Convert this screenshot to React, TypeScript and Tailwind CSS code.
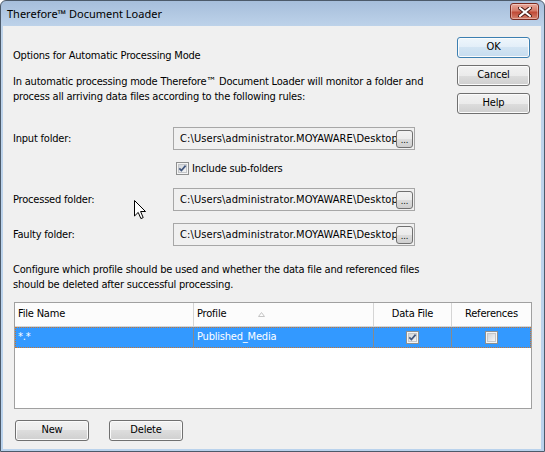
import React from "react";

const dlg = "font-['DejaVu_Sans_Condensed','Liberation_Sans',sans-serif] text-[11px] tracking-[-0.2px] text-black";

type BtnProps = { label: string; isDefault?: boolean; className?: string };

const Button = ({ label, isDefault, className }: BtnProps) => (
  <div
    className={`flex h-[21px] items-center justify-center rounded-[3px] border shadow-[inset_0_0_0_1px_#fbfbfb] ${
      isDefault
        ? "border-[#3c7fb1] bg-[linear-gradient(to_bottom,#eef6fc_0%,#e2eef8_50%,#d2e4f3_50%,#c6dcef_100%)]"
        : "border-[#707070] bg-[linear-gradient(to_bottom,#f2f2f2_0%,#ebebeb_50%,#dddddd_50%,#cfcfcf_100%)]"
    } ${className ?? ""}`}
  >
    {label}
  </div>
);

const CheckBox = ({ checked }: { checked: boolean }) => (
  <svg width="13" height="13" viewBox="0 0 13 13" className="shrink-0">
    <defs>
      <linearGradient id="cbg" x1="0" y1="0" x2="1" y2="1">
        <stop offset="0" stopColor="#cfd3d8" />
        <stop offset="1" stopColor="#f7f7f7" />
      </linearGradient>
    </defs>
    <rect x="0.5" y="0.5" width="12" height="12" fill="#f4f4f4" stroke="#8e8f8f" />
    <rect x="2.5" y="2.5" width="8" height="8" fill="url(#cbg)" stroke="#c4c6c9" />
    {checked && (
      <path d="M3.3 6.4 L5.4 8.6 L9.6 3.6" fill="none" stroke="#43587e" strokeWidth="1.7" />
    )}
  </svg>
);

const FolderRow = ({ label }: { label: string }) => (
  <div className="flex h-[23px] items-center">
    <div className="w-[160px]">{label}</div>
    <div className="flex h-[23px] w-[242px] items-center border border-[#a7a7a7] bg-[#f0f0f0] pl-[6px] pr-[1px]">
      <div className="min-w-0 flex-1 whitespace-nowrap tracking-[0.1px]">
        C:\Users\administrator.MOYAWARE\Desktop
      </div>
      <div className="flex h-[18px] w-[17px] shrink-0 items-end justify-center rounded-[3px] border border-[#707070] bg-[linear-gradient(to_bottom,#f2f2f2_0%,#ebebeb_50%,#dddddd_50%,#cfcfcf_100%)] pb-[2px] text-[9px] leading-[9px] tracking-normal">
        ...
      </div>
    </div>
  </div>
);

const CloseGlyph = () => (
  <svg width="14" height="10" viewBox="0 0 14 10">
    <path d="M2 1 L12 9 M12 1 L2 9" stroke="#4a1a14" strokeWidth="4" strokeLinecap="square" />
    <path d="M2 1 L12 9 M12 1 L2 9" stroke="#ffffff" strokeWidth="2" strokeLinecap="square" />
  </svg>
);

const Cursor = () => (
  <svg width="13" height="20" viewBox="0 0 13 20" className="absolute left-[133px] top-[199px]">
    <path
      d="M0.5 0.5 L0.5 16 L4.2 12.4 L6.9 18.6 L9.2 17.6 L6.6 11.5 L11.5 11.5 Z"
      fill="#ffffff"
      stroke="#000000"
      strokeWidth="1"
    />
  </svg>
);

const App = () => {
  return (
    <div className="relative flex h-[452px] w-[545px] flex-col overflow-hidden rounded-t-[6px] border border-[#4c5a6a] bg-[linear-gradient(to_bottom,#a6bedb_0px,#bed3ea_26px,#b9d2ec_100%)]">
      {/* title bar */}
      <div className="flex h-[25px] shrink-0 items-center justify-between pl-[6px] pr-[5px]">
        <div className="pt-[2px] font-['Noto_Sans','Open_Sans',sans-serif] text-[11px] text-black">
          Therefore™ Document Loader
        </div>
        <div className="mt-[-4px] flex h-[17px] w-[29px] items-center justify-center rounded-[3px] border border-[#7a2a20] bg-[linear-gradient(to_bottom,#e9a99b_0%,#d47a69_45%,#c04a36_55%,#d5826f_100%)] shadow-[inset_0_0_0_1px_rgba(255,255,255,0.35)]">
          <CloseGlyph />
        </div>
      </div>

      {/* client area */}
      <div className={`mb-[2px] ml-[2px] mr-[3px] flex flex-1 flex-col bg-[#f0f0f0] pl-[10px] pr-[9px] ${dlg}`}>
        <div className="flex">
          <div className="flex flex-1 flex-col pt-[22px] leading-[15px]">
            <div>Options for Automatic Processing Mode</div>
            <div className="mt-[11px]">
              In automatic processing mode Therefore™ Document Loader will monitor a folder and
              <br />
              process all arriving data files according to the following rules:
            </div>
            <div className="mt-[23px]">
              <FolderRow label="Input folder:" />
            </div>
            <div className="mt-[11px] flex h-[15px] items-center gap-[3px] pl-[163px]">
              <CheckBox checked />
              <span>Include sub-folders</span>
            </div>
            <div className="mt-[12px]">
              <FolderRow label="Processed folder:" />
            </div>
            <div className="mt-[12px]">
              <FolderRow label="Faulty folder:" />
            </div>
          </div>
          <div className="mr-[2px] mt-[11px] flex w-[73px] flex-col gap-[7px]">
            <Button label="OK" isDefault />
            <Button label="Cancel" />
            <Button label="Help" />
          </div>
        </div>

        <div className="mt-[16px] leading-[15px]">
          Configure which profile should be used and whether the data file and referenced files
          <br />
          should be deleted after successful processing.
        </div>

        {/* list */}
        <div className="ml-[1px] mt-[10px] flex h-[107px] flex-col border border-[#a0a0a0] bg-white">
          <div className="flex h-[24px] border-b border-[#d5d5d5] bg-[#fcfcfc]">
            <div className="flex w-[179px] items-center border-r border-[#d5d5d5] pl-[3px]">File Name</div>
            <div className="flex w-[180px] items-center gap-[32px] border-r border-[#d5d5d5] pl-[3px]">
              <span>Profile</span>
              <svg width="7" height="5" viewBox="0 0 7 5">
                <path d="M3.5 0.5 L6.5 4.5 L0.5 4.5 Z" fill="none" stroke="#c4c4c4" />
              </svg>
            </div>
            <div className="flex w-[78px] items-center justify-center border-r border-[#d5d5d5]">Data File</div>
            <div className="flex flex-1 items-center justify-center">References</div>
          </div>
          <div className="flex h-[21px] border border-dotted border-[#c8742e] bg-[#3399ff] text-white">
            <div className="flex w-[178px] items-center border-r border-[#8a8a8a] pl-[2px]">*.*</div>
            <div className="flex w-[180px] items-center border-r border-[#8a8a8a] pl-[3px]">Published_Media</div>
            <div className="flex w-[78px] items-center justify-center border-r border-[#8a8a8a]">
              <CheckBox checked />
            </div>
            <div className="flex flex-1 items-center justify-center">
              <CheckBox checked={false} />
            </div>
          </div>
        </div>

        <div className="ml-[2px] mt-[11px] flex gap-[20px]">
          <Button label="New" className="w-[74px]" />
          <Button label="Delete" className="w-[74px]" />
        </div>
      </div>

      <Cursor />
    </div>
  );
};

export default App;
